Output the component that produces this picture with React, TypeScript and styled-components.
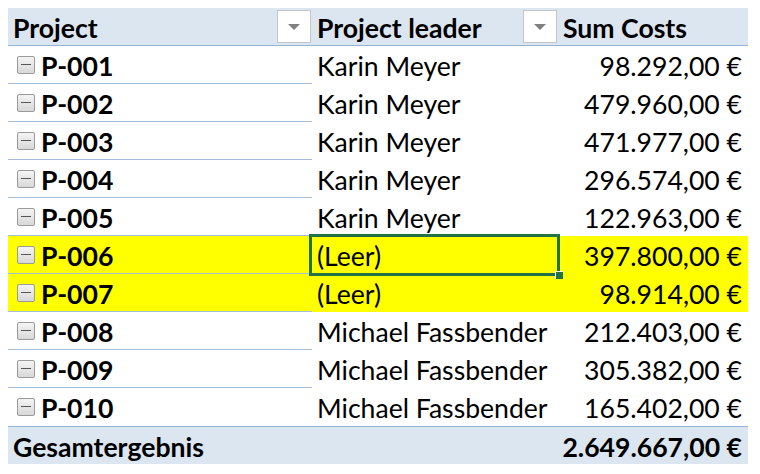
import styled, { createGlobalStyle } from 'styled-components';

const GlobalStyle = createGlobalStyle`
  body {
    margin: 0;
    background: #fff;
    font-family: Lato, 'Open Sans', sans-serif;
    color: #000;
  }
`;

const Sheet = styled.div`
  padding: 8px 12px 10px 8px;
`;

const Table = styled.div`
  display: grid;
  grid-template-columns: 304px 246px 190px;
  width: 740px;
  font-size: 26.6px;
`;

const Cell = styled.div<{ $hl?: boolean; $align?: 'right'; $bold?: boolean; $line?: boolean; $selected?: boolean }>`
  position: relative;
  z-index: ${(p) => (p.$selected ? 2 : 'auto')};
  box-sizing: border-box;
  height: 38px;
  display: flex;
  align-items: center;
  justify-content: ${(p) => (p.$align === 'right' ? 'flex-end' : 'flex-start')};
  padding: 3px 6px 0 5px;
  background: ${(p) => (p.$hl ? '#ffff00' : '#fff')};
  font-weight: ${(p) => (p.$bold ? 700 : 400)};
  border-bottom: 1px solid ${(p) => (p.$line ? '#a7bde0' : 'transparent')};
  white-space: nowrap;
`;

const HeadCell = styled(Cell)`
  background: #dce6f1;
  font-weight: 700;
  border-bottom: 1px solid #95b3d7;
  justify-content: ${(p) => (p.$align === 'right' ? 'flex-end' : 'space-between')};
  padding-right: 1px;
`;

const TotalCell = styled(Cell)`
  background: #dce6f1;
  font-weight: 700;
  border-bottom: none;
  border-top: 1px solid #95b3d7;
`;

const FilterButton = styled.div`
  box-sizing: border-box;
  width: 34px;
  height: 33px;
  margin-top: -3px;
  background: #fff;
  border: 1px solid #c6c6c6;
  display: flex;
  align-items: center;
  justify-content: center;

  &::after {
    content: '';
    border-left: 6px solid transparent;
    border-right: 6px solid transparent;
    border-top: 6px solid #808080;
  }
`;

const Collapse = styled.span`
  box-sizing: border-box;
  width: 18px;
  height: 18px;
  margin: -3px 6px 0 4px;
  border: 1px solid #9a9a9a;
  border-radius: 2px;
  background: linear-gradient(#f4f4f4, #d8d8d8);
  display: flex;
  align-items: center;
  justify-content: center;

  &::after {
    content: '';
    width: 10px;
    height: 1px;
    background: #555;
  }
`;

const Selection = styled.div`
  position: absolute;
  left: -3px;
  top: -2px;
  right: -2px;
  bottom: -3px;
  border: 3px solid #217346;
  pointer-events: none;

  &::after {
    content: '';
    position: absolute;
    right: -6px;
    bottom: -6px;
    width: 7px;
    height: 7px;
    background: #217346;
    border-left: 1px solid #fff;
    border-top: 1px solid #fff;
  }
`;

interface Row {
  id: string;
  leader: string;
  cost: string;
}

const rows: Array<Row> = [
  { id: 'P-001', leader: 'Karin Meyer', cost: '98.292,00 €' },
  { id: 'P-002', leader: 'Karin Meyer', cost: '479.960,00 €' },
  { id: 'P-003', leader: 'Karin Meyer', cost: '471.977,00 €' },
  { id: 'P-004', leader: 'Karin Meyer', cost: '296.574,00 €' },
  { id: 'P-005', leader: 'Karin Meyer', cost: '122.963,00 €' },
  { id: 'P-006', leader: '(Leer)', cost: '397.800,00 €' },
  { id: 'P-007', leader: '(Leer)', cost: '98.914,00 €' },
  { id: 'P-008', leader: 'Michael Fassbender', cost: '212.403,00 €' },
  { id: 'P-009', leader: 'Michael Fassbender', cost: '305.382,00 €' },
  { id: 'P-010', leader: 'Michael Fassbender', cost: '165.402,00 €' },
];

const App = () => {
  return (
    <Sheet>
      <GlobalStyle />
      <Table>
        <HeadCell>
          Project
          <FilterButton />
        </HeadCell>
        <HeadCell>
          Project leader
          <FilterButton />
        </HeadCell>
        <HeadCell>Sum Costs</HeadCell>

        {rows.map((row, index) => {
          const hl = row.leader === '(Leer)';
          const last = index === rows.length - 1;
          const selected = row.id === 'P-006';
          return [
            <Cell key={row.id + 'a'} $hl={hl} $bold $line={!last}>
              <Collapse />
              {row.id}
            </Cell>,
            <Cell key={row.id + 'b'} $hl={hl} $selected={selected}>
              {row.leader}
              {selected && <Selection />}
            </Cell>,
            <Cell key={row.id + 'c'} $hl={hl} $align="right">
              {row.cost}
            </Cell>,
          ];
        })}

        <TotalCell>Gesamtergebnis</TotalCell>
        <TotalCell />
        <TotalCell $align="right">2.649.667,00 €</TotalCell>
      </Table>
    </Sheet>
  );
};

export default App;
